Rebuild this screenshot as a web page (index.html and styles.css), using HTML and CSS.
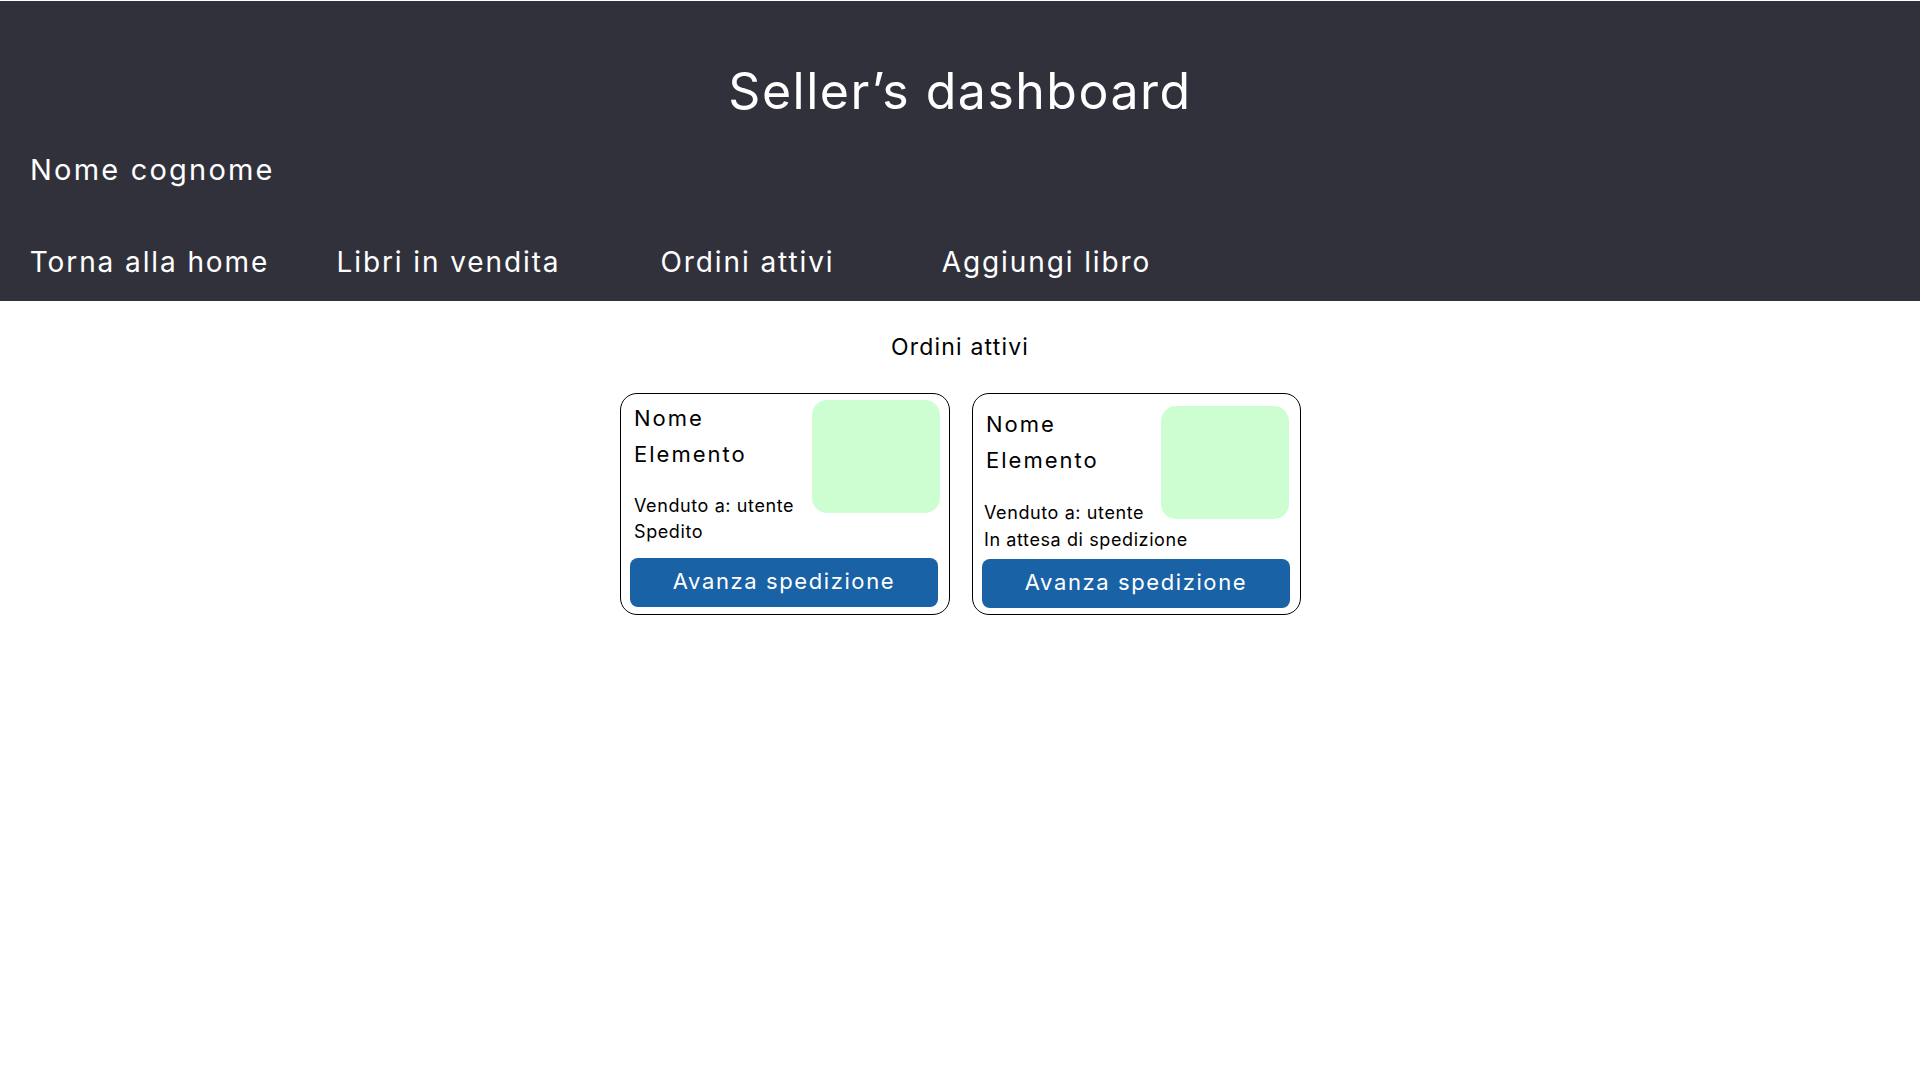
FILE: index.html
```html
<!DOCTYPE html>
<html lang="it">
<head>
<meta charset="utf-8">
<title>Seller's dashboard</title>
<link rel="stylesheet" href="styles.css">
</head>
<body>
<header class="topbar">
  <h1 class="title">Seller’s dashboard</h1>
  <div class="user">Nome cognome</div>
  <nav class="nav">
    <a class="nav-item" href="#">Torna alla home</a>
    <a class="nav-item" href="#">Libri in vendita</a>
    <a class="nav-item" href="#">Ordini attivi</a>
    <a class="nav-item" href="#">Aggiungi libro</a>
  </nav>
</header>
<main class="content">
  <h2 class="section-title">Ordini attivi</h2>
  <div class="cards">
    <div class="card">
      <div class="card-body">
        <div class="card-name">Nome<br>Elemento</div>
        <div class="card-thumb"></div>
        <div class="card-info">Venduto a: utente<br>Spedito</div>
      </div>
      <button class="card-btn">Avanza spedizione</button>
    </div>
    <div class="card card--alt">
      <div class="card-body">
        <div class="card-name">Nome<br>Elemento</div>
        <div class="card-thumb"></div>
        <div class="card-info">Venduto a: utente<br>In attesa di spedizione</div>
      </div>
      <button class="card-btn">Avanza spedizione</button>
    </div>
  </div>
</main>
</body>
</html>
```
FILE: styles.css
```css
* { box-sizing: border-box; }
html, body {
  margin: 0;
  padding: 0;
  background: #ffffff;
}
body {
  font-family: "Inter", "Noto Sans", sans-serif;
  color: #000;
  padding-top: 1px;
}
.topbar {
  background: #31313c;
  color: #ffffff;
  padding: 60px 0 22px;
  height: 300px;
}
.title {
  margin: 0;
  text-align: center;
  font-weight: 400;
  font-size: 50px;
  line-height: 60px;
  letter-spacing: 1.5px;
}
.user {
  margin-top: 31px;
  padding-left: 30px;
  font-size: 29px;
  line-height: 36px;
  letter-spacing: 2.2px;
}
.nav {
  margin-top: 57px;
  display: grid;
  grid-template-columns: repeat(4, 299px);
}
.nav-item {
  color: #ffffff;
  text-decoration: none;
  text-align: center;
  font-size: 28px;
  line-height: 34px;
  letter-spacing: 1.9px;
}
.content {
  padding-top: 32px;
}
.section-title {
  margin: 0;
  text-align: center;
  font-weight: 400;
  font-size: 23px;
  line-height: 28px;
  letter-spacing: 1.2px;
}
.cards {
  margin-top: 32px;
  display: flex;
  justify-content: center;
  gap: 22px;
  padding-left: 1px;
}
.card {
  width: 330px;
  height: 222px;
  border: 1px solid #000;
  border-radius: 17px;
  padding: 6px 9px 7px 9px;
  display: flex;
  flex-direction: column;
}
.card--alt {
  width: 329px;
  padding-top: 12px;
  padding-right: 11px;
  padding-bottom: 6px;
}
.card-body {
  display: grid;
  grid-template-columns: minmax(0, 1fr) 128px;
  grid-template-rows: 72px auto;
  row-gap: 21px;
}
.card-name {
  grid-column: 1;
  grid-row: 1;
  padding-left: 4px;
  font-size: 22px;
  line-height: 36px;
  letter-spacing: 2px;
}
.card-thumb {
  grid-column: 2;
  grid-row: 1 / span 2;
  width: 128px;
  height: 113px;
  border-radius: 15px;
  background: #ccfed2;
}
.card-info {
  grid-column: 1;
  grid-row: 2;
  padding-left: 4px;
  font-size: 18px;
  line-height: 26px;
  letter-spacing: 0.6px;
  white-space: nowrap;
}
.card--alt .card-info {
  padding-left: 2px;
  line-height: 27px;
}
.card-btn {
  margin-top: auto;
  width: 308px;
  height: 49px;
  border: none;
  border-radius: 8px;
  background: #1a62a6;
  color: #ffffff;
  font-family: inherit;
  font-size: 22px;
  line-height: 46px;
  letter-spacing: 1.6px;
  padding: 0 0 3px;
  cursor: pointer;
}
```
